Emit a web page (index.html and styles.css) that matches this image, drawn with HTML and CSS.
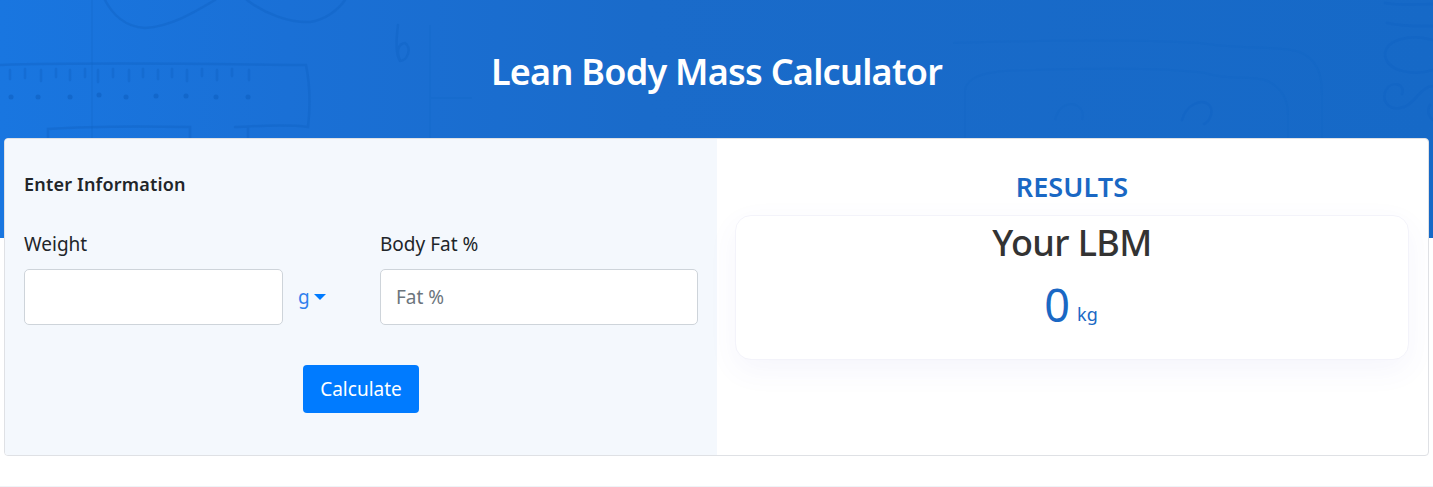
FILE: index.html
```html
<!DOCTYPE html>
<html lang="en">
<head>
<meta charset="utf-8">
<title>Lean Body Mass Calculator</title>
<link rel="stylesheet" href="styles.css">
</head>
<body>
<header class="hero">
  <svg class="doodles" width="1433" height="238" viewBox="0 0 1433 238" fill="none" aria-hidden="true">
    <g class="doodle-strong">
      <path d="M105 0C112 14 125 27 145 28C170 27 195 12 215 0"/>
      <path d="M247 0C265 14 290 23 310 22C325 20 338 10 345 0"/>
      <path d="M0 65C100 62 200 64 306 65C310 85 310 110 308 127C285 124 260 126 235 127M248 127V138"/>
      <path d="M48 138V129C90 126 140 126 190 127V138"/>
      <path d="M10 70V79M25 69V78M41 70V81M56 69V77M70 70V80M85 69V77M98 70V82M113 69V77M129 70V81M143 69V77M158 70V79M172 69V77M187 70V81M202 69V76M217 70V80M232 69V76M249 70V80"/>
      <path d="M398 25C396 40 396 55 400 61C408 60 412 48 405 43C398 44 396 52 400 60"/>
      <path d="M1385 3C1405 6 1420 4 1433 4M1387 23C1405 27 1420 26 1433 26M1433 40C1410 33 1385 40 1385 55C1387 72 1415 76 1433 70M1433 86C1420 86 1415 106 1400 108C1388 110 1381 100 1386 90C1392 80 1406 84 1402 94"/>
      <path d="M1430 105C1426 112 1430 118 1433 120"/>
      <path d="M1182 120C1186 105 1202 97 1210 106C1214 113 1209 122 1204 124"/>
    </g>
    <g class="doodle-faint">
      <path d="M92 0V138M430 25V138M430 98H472"/>
      <path d="M953 43C1050 40 1130 39 1200 43C1240 50 1280 45 1300 52C1318 60 1322 75 1322 95V138"/>
      <path d="M965 138V90C968 72 1000 70 1035 70C1100 68 1170 68 1205 73C1225 80 1250 76 1265 80C1283 87 1288 100 1288 115V138"/>
      <path d="M1055 120C1058 105 1072 100 1080 108C1084 112 1083 117 1082 120"/>
    </g>
    <g class="dots">
      <circle cx="11" cy="97" r="2.5"/><circle cx="38" cy="97" r="2.5"/><circle cx="70" cy="97" r="2.5"/>
      <circle cx="99" cy="95" r="2.5"/><circle cx="126" cy="97" r="2.5"/><circle cx="156" cy="96" r="2.5"/>
      <circle cx="186" cy="96" r="2.5"/><circle cx="216" cy="97" r="2.5"/><circle cx="248" cy="97" r="2.5"/>
    </g>
  </svg>
  <h1 class="hero-title">Lean Body Mass Calculator</h1>
</header>

<main class="card">
  <section class="form-panel">
    <h2 class="form-heading">Enter Information</h2>
    <div class="fields">
      <div class="field field-weight">
        <label class="field-label" for="weight">Weight</label>
        <div class="input-row">
          <input class="text-input weight-input" id="weight" type="text">
          <button class="unit-toggle" type="button">g<span class="caret"></span></button>
        </div>
      </div>
      <div class="field">
        <label class="field-label" for="fat">Body Fat %</label>
        <input class="text-input" id="fat" type="text" placeholder="Fat %">
      </div>
    </div>
    <div class="actions">
      <button class="calc-button" type="button">Calculate</button>
    </div>
  </section>
  <section class="results-panel">
    <h2 class="results-heading">RESULTS</h2>
    <div class="result-box">
      <h3 class="result-title">Your LBM</h3>
      <p class="result-value"><span class="value-number">0</span><span class="value-unit">kg</span></p>
    </div>
  </section>
</main>
<div class="page-rule"></div>
</body>
</html>
```

FILE: styles.css
```css
* { box-sizing: border-box; }

html, body { margin: 0; padding: 0; }

body {
  height: 487px;
  overflow: hidden;
  background: #fff;
  color: #212529;
  font-family: "Noto Sans", "Open Sans", sans-serif;
}

.hero {
  position: relative;
  height: 238px;
  padding-top: 47px;
  background: linear-gradient(90deg, #1976e0 0%, #1a70d6 20%, #1a6bca 45%, #1669c7 100%);
  overflow: hidden;
}

.doodles { position: absolute; left: 0; top: 0; }
.doodle-strong path { stroke: #0f62c4; stroke-opacity: .4; stroke-width: 2.5; stroke-linecap: round; }
.doodle-faint path { stroke: #0f62c4; stroke-opacity: .2; stroke-width: 2; }
.dots circle { fill: #0f62c4; fill-opacity: .7; }

.hero-title {
  position: relative;
  margin: 0;
  text-align: center;
  color: #fff;
  font-size: 36px;
  line-height: 50px;
  font-weight: 600;
  letter-spacing: -.75px;
}

.card {
  position: relative;
  display: flex;
  height: 318px;
  margin: -100px 4px 0;
  background: #fff;
  border: 1px solid #dfe1e5;
  border-radius: 4px;
  overflow: hidden;
}

.form-panel {
  width: 712px;
  padding: 31px 19px 0;
  background: #f4f8fd;
}

.form-heading {
  margin: 0 0 32px;
  font-size: 18px;
  line-height: 28px;
  font-weight: 600;
  letter-spacing: .2px;
}

.fields {
  display: grid;
  grid-template-columns: 326px 318px;
  column-gap: 30px;
}

.field-label {
  display: block;
  margin-bottom: 11px;
  font-size: 19px;
  line-height: 28px;
}

.input-row {
  display: flex;
  align-items: center;
}

.text-input {
  display: block;
  width: 100%;
  height: 56px;
  padding: 0 15px;
  background: #fff;
  border: 1px solid #ced4da;
  border-radius: 5px;
  color: #495057;
  font: inherit;
  font-size: 19px;
}

.text-input::placeholder { color: #6c757d; opacity: 1; }

.weight-input {
  flex: none;
  width: 259px;
}

.unit-toggle {
  display: flex;
  align-items: center;
  margin-left: 15px;
  padding: 0;
  background: none;
  border: 0;
  color: #2f80ed;
  font: inherit;
  font-size: 19px;
}

.caret {
  width: 0;
  height: 0;
  margin-left: 4px;
  border-top: 6px solid #007bff;
  border-left: 6.5px solid transparent;
  border-right: 6.5px solid transparent;
}

.actions {
  display: flex;
  justify-content: center;
  margin-top: 40px;
}

.calc-button {
  width: 116px;
  height: 48px;
  padding: 0;
  background: #007bff;
  border: 0;
  border-radius: 4px;
  color: #fff;
  font: inherit;
  font-size: 19px;
}

.results-panel {
  flex: 1;
  padding: 29px 19px 0 18px;
  text-align: center;
}

.results-heading {
  margin: 0 0 9px;
  color: #1a68c4;
  font-size: 27px;
  line-height: 38px;
  font-weight: 600;
  letter-spacing: .1px;
}

.result-box {
  height: 145px;
  padding-top: 2px;
  background: #fff;
  border: 1px solid #f3f3fa;
  border-radius: 16px;
  box-shadow: 0 10px 30px rgba(90, 90, 200, .06);
}

.result-title {
  margin: 0;
  color: #333;
  font-size: 36px;
  line-height: 50px;
  font-weight: 500;
  letter-spacing: -.6px;
}

.result-value {
  margin: 7px 0 0;
  padding-right: 2px;
  color: #1a68c4;
  line-height: 60px;
}

.value-number {
  font-size: 45px;
}

.value-unit {
  margin-left: 7px;
  font-size: 18px;
  vertical-align: 1px;
}

.page-rule {
  height: 1px;
  margin-top: 30px;
  background: #eff3f7;
}
```
